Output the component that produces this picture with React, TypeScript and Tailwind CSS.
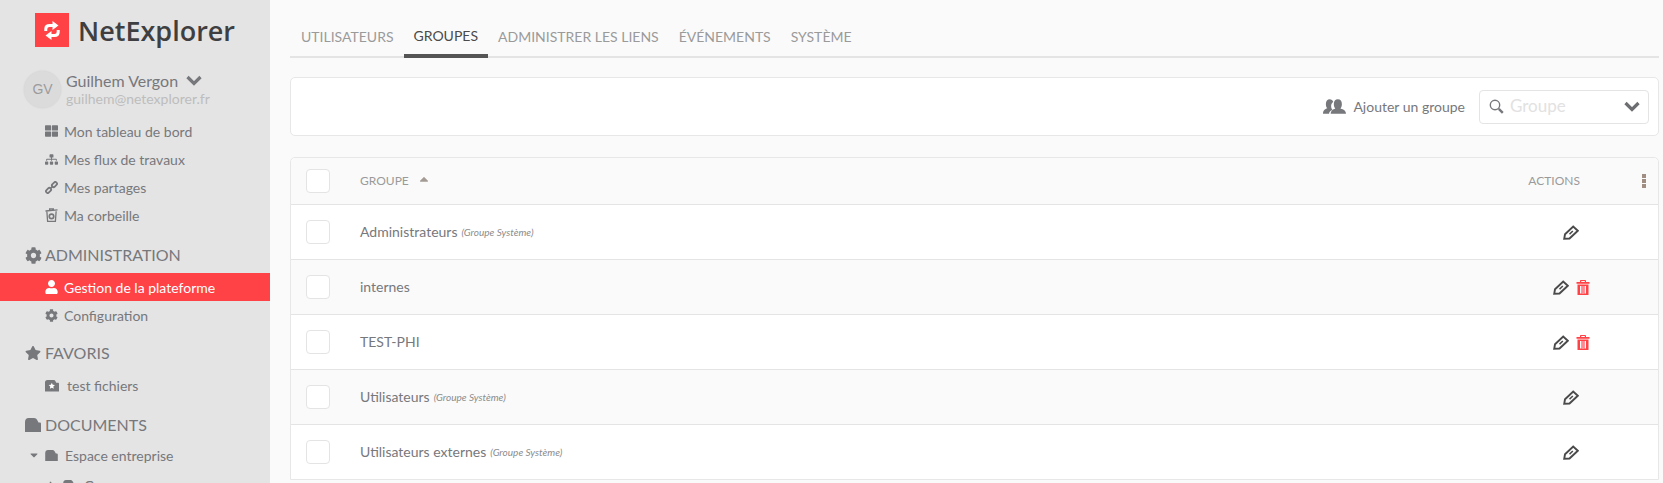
import { FaCog, FaStar, FaUser, FaThLarge, FaSitemap, FaCaretDown, FaCaretRight, FaCaretUp } from 'react-icons/fa'

// Dossier plein, coins arrondis
const FolderIcon = ({ className }: { className?: string }) => (
	<svg viewBox="0 0 16 14" className={className} fill="currentColor">
		<path d="M0 14V4C0 1.5 1.5 0 3.5 0H9C10.5 0 11.5.8 12.3 2.2L13.5 4.5H14.8C15.5 4.5 16 5 16 5.700V14Z" />
	</svg>
)

const ChainIcon = ({ className }: { className?: string }) => (
	<svg viewBox="0 0 14 14" className={className} fill="none" stroke="currentColor" strokeWidth="1.9">
		<rect x="-3" y="-1.800" width="6" height="3.600" rx="1.400" transform="translate(3.800 10.200) rotate(-45)" />
		<rect x="-3" y="-1.800" width="6" height="3.600" rx="1.400" transform="translate(10.200 3.800) rotate(-45)" />
		<path d="M5.500 8.500l3-3" />
	</svg>
)

const BinIcon = ({ className }: { className?: string }) => (
	<svg viewBox="0 0 14 15" className={className} fill="none" stroke="currentColor" strokeWidth="1.4">
		<path d="M.5 3.200L13.500 2M5 2.800V1h4v1.500M2 3.500l.8 10.800h8.400L12 3.500" />
		<circle cx="7" cy="9" r="2.400" strokeWidth="1.800" />
	</svg>
)

const FolderStarIcon = ({ className }: { className?: string }) => (
	<svg viewBox="0 0 15 13" className={className}>
		<path fill="currentColor" d="M0 13V3C0 1.500 1 .5 2.500 .5H9C10.500.5 11 1.200 11.500 2.500L12 3.500H14C14.600 3.500 15 4 15 4.500V13Z" />
		<path fill="#fff" d="M7.300 3.500l1 2.200 2.400.3-1.800 1.600.5 2.400-2.100-1.200-2.100 1.200.5-2.400L3.900 6l2.400-.3z" />
	</svg>
)

const PenIcon = () => (
	<svg viewBox="0 0 16 15" className="h-[15px] w-[16px] text-[#4a4a4a]" fill="none" stroke="currentColor" strokeWidth="1.900">
		<path d="M1.200 13.800l.8-4.500L10.200 1.500 14.800 5.800 6.500 13.500z" />
		<path d="M6.500 9.200l3.300-3.200" strokeWidth="1.600" />
	</svg>
)

const TrashIcon = () => (
	<svg viewBox="0 0 14 15" className="h-[15px] w-[14px] text-[#ff4246]" fill="currentColor">
		<path d="M4 2V.8C4 .3 4.300 0 4.800 0h4.400C9.700 0 10 .3 10 .8V2h3.500v1.700H.5V2zM5.200 2h3.600V1.100H5.200z" />
		<path fillRule="evenodd" d="M1.500 4.500h11V15h-11zM4 6v7.500h1.300V6zm2.300 0v7.500h1.400V6zm2.400 0v7.500H10V6z" />
		<path fill="#ffa3ad" d="M5.300 6h3.400v7.500H5.300z" />
		<path d="M6.300 6h1.400v7.500H6.300z" fill="#ff7f88" />
	</svg>
)

const UsersIcon = () => (
	<svg viewBox="0 0 24 15" className="h-[15px] w-[23px] text-[#77787c]" fill="currentColor">
		<path d="M0 15c0-3.600 2-4.600 4.500-5.600C3.400 8.200 3 6.800 3 4.800 3 1.800 4.600 0 7 0c1.800 0 3.100 1 3.700 2.700-1.500 1-2.200 2.400-2.200 4.300 0 1.700.5 3 1.400 4-1.800.8-3.300 2-3.600 4z" />
		<path d="M8 15c.3-3.400 2.200-4.300 4.800-5.400-1.100-1.200-1.500-2.600-1.500-4.600 0-3 1.500-5 4.200-5s4.200 2 4.200 5c0 2-.4 3.400-1.500 4.600C21.800 10.700 23.700 11.600 24 15z" />
	</svg>
)

const SearchIcon = () => (
	<svg viewBox="0 0 15 15" className="h-[15px] w-[15px] text-[#77787c]" fill="none" stroke="currentColor">
		<circle cx="6" cy="6" r="4.700" strokeWidth="1.400" />
		<path d="M9.800 9.800l4 4" strokeWidth="2.400" />
	</svg>
)

const Chevron = ({ className }: { className?: string }) => (
	<svg viewBox="0 0 16 11" className={className} fill="none" stroke="currentColor" strokeWidth="3.200">
		<path d="M1.500 2l6.500 6.500L14.500 2" />
	</svg>
)

const SideItem = ({ icon, label, active = false }: { icon: React.ReactNode; label: string; active?: boolean }) => (
	<div className={`flex h-[28px] items-center pl-[45px] text-[14px] ${active ? 'bg-[#ff4246] text-white' : 'text-[#77787c]'}`}>
		<span className="flex w-[19px] shrink-0 items-center">{icon}</span>
		{label}
	</div>
)

const SideTitle = ({ icon, label, className }: { icon: React.ReactNode; label: string; className: string }) => (
	<div className={`flex items-center pl-[25px] text-[16px] leading-[20px] text-[#77787c] ${className}`}>
		<span className="flex w-[20px] shrink-0 items-center">{icon}</span>
		{label}
	</div>
)

const tabs = ['UTILISATEURS', 'GROUPES', 'ADMINISTRER LES LIENS', 'ÉVÉNEMENTS', 'SYSTÈME']

const groups = [
	{ name: 'Administrateurs', system: true },
	{ name: 'internes', system: false },
	{ name: 'TEST-PHI', system: false },
	{ name: 'Utilisateurs', system: true },
	{ name: 'Utilisateurs externes', system: true },
]

const CheckBox = () => <div className="h-[24px] w-[24px] rounded-[4px] border border-[#e4e4e4] bg-white" />

export default function App() {
	return (
		<div className="flex h-[483px] overflow-hidden bg-[#fafafa] font-['Lato',sans-serif]">
			{/* Sidebar */}
			<aside className="w-[270px] shrink-0 overflow-hidden bg-[#e4e4e4]">
				<div className="flex h-[60px] items-center pl-[35px]">
					<div className="flex h-[34px] w-[34px] items-center justify-center bg-[#ff4246]">
						<svg viewBox="0 0 16 19" className="h-[19px] w-[16px]" fill="none" stroke="#fff" strokeWidth="3">
							<path d="M1.800 10V8C1.800 5.500 3.500 4.500 5.500 4.500H9" />
							<path d="M8.500 0L14.500 4.500 8.500 9z" fill="#fff" stroke="none" />
							<path d="M14.200 9v2c0 2.500-1.700 3.500-3.700 3.500H7" />
							<path d="M7.500 10L1.500 14.500 7.500 19z" fill="#fff" stroke="none" />
						</svg>
					</div>
					<span className="ml-[9px] font-['Open_Sans',sans-serif] text-[27px] font-semibold leading-none text-[#3f3f41]">NetExplorer</span>
				</div>

				<div className="mt-[11px] flex items-center pl-[24px]">
					<div className="flex h-[37px] w-[37px] items-center justify-center rounded-full bg-[#dcdbdc] font-['Liberation_Sans',sans-serif] text-[14px] text-[#9b9b9b] shadow-[0_0_2px_rgba(0,0,0,0.1)]">GV</div>
					<div className="-mt-[2px] ml-[5px]">
						<div className="flex items-center text-[16px] leading-[20px] text-[#77787c]">
							Guilhem Vergon
							<Chevron className="ml-[8px] h-[11px] w-[16px]" />
						</div>
						<div className="text-[14px] leading-[16px] text-[#bdbdbd]">guilhem@netexplorer.fr</div>
					</div>
				</div>

				<div className="mt-[9px]">
					<SideItem icon={<FaThLarge className="h-[14px] w-[13px]" />} label="Mon tableau de bord" />
					<SideItem icon={<FaSitemap className="h-[13px] w-[13px]" />} label="Mes flux de travaux" />
					<SideItem icon={<ChainIcon className="h-[13px] w-[13px]" />} label="Mes partages" />
					<SideItem icon={<BinIcon className="h-[14px] w-[13px]" />} label="Ma corbeille" />
				</div>

				<SideTitle className="mt-[16px]" icon={<FaCog className="h-[17px] w-[17px]" />} label="ADMINISTRATION" />

				<div className="mt-[8px]">
					<SideItem active icon={<FaUser className="h-[14px] w-[13px]" />} label="Gestion de la plateforme" />
					<SideItem icon={<FaCog className="h-[13px] w-[13px]" />} label="Configuration" />
				</div>

				<SideTitle className="mt-[14px]" icon={<FaStar className="h-[16px] w-[16px]" />} label="FAVORIS" />

				<div className="mt-[8px] flex h-[28px] items-center pl-[45px] text-[14px] text-[#77787c]">
					<FolderStarIcon className="mr-[8px] h-[13px] w-[14px]" />
					test fichiers
				</div>

				<SideTitle className="mt-[16px]" icon={<FolderIcon className="h-[14px] w-[16px]" />} label="DOCUMENTS" />

				<div className="mt-[6px] flex h-[28px] items-center pl-[28px] text-[14px] text-[#77787c]">
					<FaCaretDown className="mr-[5px] h-[12px] w-[12px]" />
					<FolderIcon className="mr-[7px] h-[11px] w-[13px]" />
					Espace entreprise
				</div>
				<div className="mt-[2px] flex h-[28px] items-center pl-[48px] text-[14px] text-[#77787c]">
					<FaCaretRight className="mr-[7px] h-[12px] w-[8px]" />
					<FolderIcon className="mr-[8px] h-[11px] w-[13px]" />
					Groupes
				</div>
			</aside>

			{/* Contenu */}
			<main className="min-w-0 flex-1 pl-[20px] pr-[4px]">
				<nav className="mt-[18px] flex h-[40px] border-b-2 border-[#e4e4e4] pl-[1px]">
					{tabs.map((tab) => (
						<div
							key={tab}
							className={`-mb-[2px] flex items-center px-[10px] pb-[3px] text-[14px] ${tab === 'GROUPES' ? 'border-b-4 border-[#555] pt-[1px] text-[#4a4a4a]' : 'text-[#9a9a9a]'}`}
						>
							{tab}
						</div>
					))}
				</nav>

				<div className="mt-[19px] flex h-[59px] items-center justify-end rounded-[5px] border border-[#e7e7e7] bg-white pr-[9px]">
					<UsersIcon />
					<span className="ml-[7px] text-[14px] text-[#77787c]">Ajouter un groupe</span>
					<div className="ml-[14px] flex h-[34px] w-[170px] items-center rounded-[4px] border border-[#e4e4e4] pl-[9px] pr-[8px]">
						<SearchIcon />
						<span className="mb-[2px] ml-[6px] flex-1 text-[17px] text-[#e2e2e2]">Groupe</span>
						<Chevron className="h-[11px] w-[16px] text-[#6d6e71]" />
					</div>
				</div>

				<div className="mt-[21px] rounded-t-[5px] border border-[#e7e7e7] bg-white">
					<div className="flex h-[46px] items-center rounded-t-[5px] bg-[#fafafa] pl-[15px] pr-[8px] text-[12px] text-[#9a9a9a]">
						<CheckBox />
						<span className="ml-[30px]">GROUPE</span>
						<FaCaretUp className="mb-[5px] ml-[8px] h-[14px] w-[14px] text-[#a39a94]" />
						<span className="ml-auto mr-[58px]">ACTIONS</span>
						<div className="flex w-[12px] flex-col items-center gap-[1px]">
							<i className="h-[4px] w-[4px] bg-[#a08e82]" />
							<i className="h-[4px] w-[4px] bg-[#a08e82]" />
							<i className="h-[4px] w-[4px] bg-[#a08e82]" />
						</div>
					</div>
					{groups.map((g, i) => (
						<div key={g.name} className={`flex h-[55px] items-center border-t border-[#e4e4e4] pl-[15px] ${i % 2 ? 'bg-[#fafafa]' : 'bg-white'}`}>
							<CheckBox />
							<span className="mb-[2px] ml-[30px] text-[14px] text-[#77787c]">{g.name}</span>
							{g.system && <span className="ml-[4px] text-[10px] italic text-[#8b8b8b]">(Groupe Système)</span>}
							<div className="ml-auto flex w-[171px] items-center justify-center gap-[7px] pr-[3px]">
								<PenIcon />
								{!g.system && <TrashIcon />}
							</div>
						</div>
					))}
				</div>
			</main>
		</div>
	)
}
